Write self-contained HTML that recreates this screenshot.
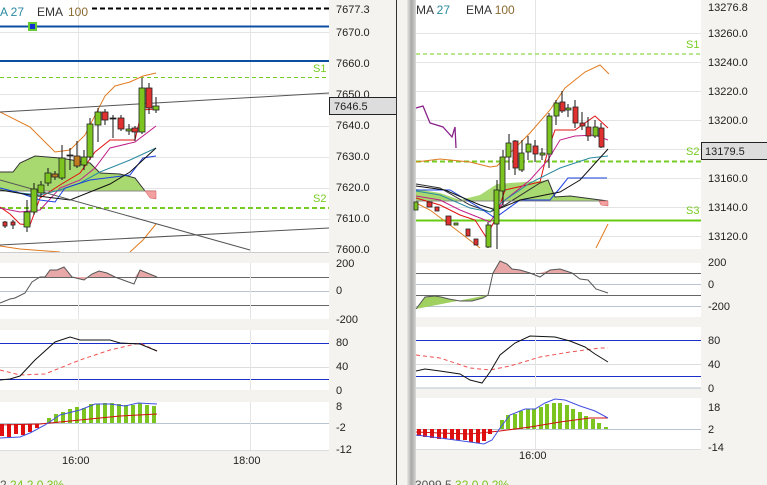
<!DOCTYPE html>
<html><head><meta charset="utf-8"><style>
html,body{margin:0;padding:0;background:#f4f3ef;}
svg{display:block;font-family:"Liberation Sans",Arial,sans-serif;}
</style></head><body>
<svg width="767" height="485" viewBox="0 0 767 485" xmlns="http://www.w3.org/2000/svg">
<rect width="767" height="485" fill="#f4f3ef"/>
<!-- LEFT PANEL -->
<rect x="0" y="0" width="329" height="252" fill="#fff"/>
<g stroke="#e4e4e4" stroke-width="1">
<line x1="0" y1="32.5" x2="329" y2="32.5"/><line x1="0" y1="94.5" x2="329" y2="94.5"/><line x1="0" y1="126.5" x2="329" y2="126.5"/><line x1="0" y1="157.5" x2="329" y2="157.5"/><line x1="0" y1="188.5" x2="329" y2="188.5"/><line x1="0" y1="219.5" x2="329" y2="219.5"/>
<line x1="78.5" y1="0" x2="78.5" y2="252"/><line x1="250.5" y1="0" x2="250.5" y2="252"/>
</g>
<line x1="92" y1="8.5" x2="329" y2="8.5" stroke="#000" stroke-width="2" stroke-dasharray="5,3"/>
<line x1="0" y1="26.5" x2="329" y2="26.5" stroke="#0b4fa0" stroke-width="2"/>
<rect x="28" y="22" width="9" height="9" fill="#6c3" /><rect x="30" y="24" width="5" height="5" fill="#1530d0"/>
<line x1="0" y1="61" x2="329" y2="61" stroke="#0b4fa0" stroke-width="2"/>
<line x1="0" y1="77.5" x2="329" y2="77.5" stroke="#7c2" stroke-dasharray="4,3"/>
<line x1="0" y1="208" x2="329" y2="208" stroke="#7c2" stroke-width="2" stroke-dasharray="5,3"/>
<text x="313" y="72" font-size="11" fill="#7c2">S1</text>
<text x="313" y="202" font-size="11" fill="#7c2">S2</text>
<text x="0" y="16" font-size="12" fill="#2a8aa0">A 27</text>
<text x="37" y="16" font-size="12" fill="#333">EMA</text><text x="68" y="16" font-size="12" fill="#8a6a30">100</text>
<polygon points="0,172 13,172 20,163 35,156 60,158 90,163 100,173 120,174 135,178 145,191 0,191" fill="#a8d870" stroke="none"/>
<polyline points="0,172 13,172 20,163 35,156 60,158 90,163 100,173 120,174 135,178 145,191" fill="none" stroke="#333" stroke-width="1"/>
<line x1="0" y1="191" x2="156" y2="191" stroke="#888"/>
<polygon points="145,191 156,191 156,199 150,198" fill="#f4a0a0" stroke="#c55" stroke-width=".5"/>
<g fill="none" stroke-width="1">
<polyline points="0,112 30,127 55,152 70,150 85,135 105,96 115,86 130,82 143,76 156,73" stroke="#e07b20"/>
<polyline points="0,246 20,249 60,252" stroke="#e07b20"/>
<polyline points="130,252 143,240 156,224" stroke="#e07b20"/>
<polyline points="0,207 10,214 20,224 30,225 40,198 60,185 80,173 95,152 110,140 135,140 142,110 156,109" stroke="#e01010"/>
<polyline points="0,208 20,212 40,210 60,188 80,180 95,168 110,148 135,142 156,126" stroke="#c0208a"/>
<polyline points="0,188 20,193 40,195 60,190 80,183 100,172 130,160 156,148" stroke="#2a8aa0"/>
<polyline points="0,188 20,193 40,200 55,202 65,188 90,180 130,175 143,158 156,156" stroke="#1a40e0"/>
<polyline points="0,190 30,195 70,200 110,184 130,172 156,148" stroke="#111"/>
<polyline points="0,112 329,93" stroke="#555"/>
<polyline points="0,245 329,228" stroke="#555"/>
<polyline points="0,180 250,250" stroke="#555"/>
</g>
<g stroke="#111" stroke-width="1">
<line x1="5" y1="221" x2="5" y2="228"/><line x1="13" y1="220" x2="13" y2="229"/><line x1="27" y1="200" x2="27" y2="232"/><line x1="34" y1="183" x2="34" y2="215"/><line x1="41" y1="181" x2="41" y2="196"/><line x1="48" y1="168" x2="48" y2="186"/><line x1="55" y1="171" x2="55" y2="180"/><line x1="62" y1="145" x2="62" y2="180"/><line x1="70" y1="148" x2="70" y2="170"/><line x1="77" y1="141" x2="77" y2="168"/><line x1="84" y1="150" x2="84" y2="170"/><line x1="90" y1="118" x2="90" y2="160"/><line x1="98" y1="108" x2="98" y2="142"/><line x1="105" y1="109" x2="105" y2="125"/><line x1="113" y1="115" x2="113" y2="138"/><line x1="121" y1="115" x2="121" y2="131"/><line x1="129" y1="124" x2="129" y2="135"/><line x1="135" y1="126" x2="135" y2="141"/><line x1="142" y1="78" x2="142" y2="134"/><line x1="149" y1="83" x2="149" y2="114"/><line x1="156" y1="97" x2="156" y2="113"/>
</g>
<g stroke="#222" stroke-width=".8">
<rect x="3" y="222" width="4" height="4" fill="#e03030"/><rect x="11" y="222" width="4" height="3" fill="#e03030"/>
<rect x="24" y="212" width="6" height="15" fill="#7cc520"/><rect x="31" y="189" width="6" height="23" fill="#7cc520"/><rect x="38" y="185" width="6" height="8" fill="#7cc520"/><rect x="45" y="173" width="6" height="10" fill="#7cc520"/><rect x="52" y="174" width="6" height="3" fill="#c07a20"/><rect x="59" y="158" width="6" height="20" fill="#7cc520"/><rect x="67" y="155" width="6" height="1" fill="#111"/><rect x="74" y="156" width="6" height="10" fill="#c07a20"/><rect x="81" y="157" width="6" height="8" fill="#7cc520"/><rect x="87" y="124" width="6" height="33" fill="#7cc520"/><rect x="95" y="112" width="6" height="13" fill="#7cc520"/><rect x="102" y="112" width="6" height="8" fill="#e03030"/><rect x="110" y="118" width="6" height="1" fill="#111"/><rect x="118" y="118" width="6" height="11" fill="#e03030"/><rect x="126" y="129" width="6" height="2" fill="#7cc520"/><rect x="132" y="128" width="6" height="4" fill="#e03030"/><rect x="139" y="88" width="6" height="44" fill="#7cc520"/><rect x="146" y="88" width="6" height="20" fill="#e03030"/><rect x="153" y="106" width="6" height="4" fill="#7cc520"/>
</g>
<g font-size="11" fill="#222">
<text x="336" y="13">7677.3</text><text x="336" y="36">7670.0</text><text x="336" y="67">7660.0</text><text x="336" y="98">7650.0</text><text x="336" y="129">7640.0</text><text x="336" y="160">7630.0</text><text x="336" y="191">7620.0</text><text x="336" y="222">7610.0</text><text x="336" y="253">7600.0</text>
</g>
<rect x="329.5" y="97.5" width="67" height="17" fill="#ddd" stroke="#222"/>
<text x="334" y="110" font-size="11" fill="#222">7646.5</text>
<line x1="0" y1="252.5" x2="329" y2="252.5" stroke="#ccc"/>
<!-- left osc1 -->
<rect x="0" y="263" width="329" height="56" fill="#fff"/>
<line x1="0" y1="277.5" x2="329" y2="277.5" stroke="#666"/><line x1="0" y1="291.5" x2="329" y2="291.5" stroke="#b8c4d0"/><line x1="0" y1="305.5" x2="329" y2="305.5" stroke="#666"/>
<line x1="78.5" y1="263" x2="78.5" y2="319" stroke="#e4e4e4"/><line x1="250.5" y1="263" x2="250.5" y2="319" stroke="#e4e4e4"/>
<polygon points="45,277 50,270 57,270 64,267 72,277 84,280 92,274 99,271 107,273 115,277 135,277 140,270 157,277" fill="#e8a8a8"/>
<polyline points="0,303 10,299 15,298 25,293 32,282 40,277 45,277 50,270 57,270 64,267 72,277 84,280 92,274 99,271 107,273 115,277 134,284 140,270 157,277" fill="none" stroke="#555"/>
<g font-size="11" fill="#222"><text x="336" y="267">200</text><text x="336" y="294">0</text><text x="336" y="323">-200</text></g>
<!-- left osc2 -->
<rect x="0" y="330" width="329" height="60" fill="#fff"/>
<line x1="0" y1="343.5" x2="329" y2="343.5" stroke="#1a30c8"/><line x1="0" y1="367.5" x2="329" y2="367.5" stroke="#ddd"/><line x1="0" y1="379.5" x2="329" y2="379.5" stroke="#1a30c8"/>
<line x1="78.5" y1="330" x2="78.5" y2="390" stroke="#e4e4e4"/><line x1="250.5" y1="330" x2="250.5" y2="390" stroke="#e4e4e4"/>
<polyline points="0,370 20,375 45,374 60,368 80,360 110,350 140,343 157,351" fill="none" stroke="#f05050" stroke-dasharray="4,3"/>
<polyline points="0,380 10,379 20,376 35,360 55,342 70,337 80,340 110,340 120,343 140,344 157,351" fill="none" stroke="#111"/>
<g font-size="11" fill="#222"><text x="336" y="346">80</text><text x="336" y="370">40</text><text x="336" y="394">0</text></g>
<!-- left osc3 -->
<rect x="0" y="402" width="329" height="48" fill="#fff"/>
<line x1="0" y1="423.5" x2="329" y2="423.5" stroke="#b8c4d0"/>
<line x1="78.5" y1="402" x2="78.5" y2="450" stroke="#e4e4e4"/><line x1="250.5" y1="402" x2="250.5" y2="450" stroke="#e4e4e4"/>
<g fill="#e01010"><rect x="0" y="424" width="4" height="12"/><rect x="7" y="424" width="4" height="13"/><rect x="14" y="424" width="4" height="10"/><rect x="21" y="424" width="4" height="11"/><rect x="28" y="424" width="4" height="8"/><rect x="35" y="424" width="4" height="4"/></g>
<g fill="#7cc520"><rect x="47" y="418" width="4" height="5"/><rect x="54" y="414" width="4" height="9"/><rect x="61" y="412" width="4" height="11"/><rect x="68" y="409" width="4" height="14"/><rect x="75" y="407" width="4" height="16"/><rect x="82" y="408" width="4" height="15"/><rect x="89" y="404" width="4" height="19"/><rect x="96" y="404" width="4" height="19"/><rect x="103" y="403" width="4" height="20"/><rect x="110" y="403" width="4" height="20"/><rect x="117" y="404" width="4" height="19"/><rect x="124" y="405" width="4" height="18"/><rect x="131" y="405" width="4" height="18"/><rect x="138" y="403" width="4" height="20"/><rect x="145" y="405" width="4" height="18"/><rect x="152" y="406" width="4" height="17"/></g>
<polyline points="0,425 40,424 80,420 120,416 157,414" fill="none" stroke="#d01010"/>
<polyline points="0,438 20,437 30,433 45,425 60,415 80,410 95,404 110,404 125,406 138,403 157,404" fill="none" stroke="#4050e0"/>
<g font-size="11" fill="#222"><text x="336" y="410">8</text><text x="336" y="431">-2</text><text x="336" y="453">-12</text></g>
<line x1="0" y1="450.5" x2="329" y2="450.5" stroke="#ddd"/>
<g font-size="11" fill="#222"><text x="62" y="464">16:00</text><text x="233" y="464">18:00</text></g>
<text x="0" y="489" font-size="12" fill="#555">2 <tspan fill="#7cc520">24.2 0.3%</tspan></text>
<line x1="396.5" y1="0" x2="396.5" y2="485" stroke="#333"/>
<!-- shadow -->
<defs><linearGradient id="sh" x1="0" x2="1"><stop offset="0" stop-color="#e8e8e6"/><stop offset=".5" stop-color="#a8a8a6"/><stop offset="1" stop-color="#d8d8d6"/></linearGradient></defs>
<rect x="407" y="0" width="9" height="485" fill="url(#sh)"/>
<!-- RIGHT PANEL -->
<rect x="416" y="0" width="285" height="249" fill="#fff"/>
<g stroke="#e4e4e4">
<line x1="416" y1="33.5" x2="701" y2="33.5"/><line x1="416" y1="62.5" x2="701" y2="62.5"/><line x1="416" y1="91.5" x2="701" y2="91.5"/><line x1="416" y1="120.5" x2="701" y2="120.5"/><line x1="416" y1="149.5" x2="701" y2="149.5"/><line x1="416" y1="178.5" x2="701" y2="178.5"/><line x1="416" y1="207.5" x2="701" y2="207.5"/><line x1="416" y1="236.5" x2="701" y2="236.5"/>
<line x1="535.5" y1="0" x2="535.5" y2="249"/>
</g>
<text x="416" y="14" font-size="12" fill="#333">MA <tspan fill="#2a8aa0">27</tspan></text>
<text x="466" y="14" font-size="12" fill="#333">EMA <tspan fill="#8a6a30">100</tspan></text>
<line x1="416" y1="54" x2="701" y2="54" stroke="#7c2" stroke-dasharray="4,3"/>
<line x1="416" y1="161.5" x2="701" y2="161.5" stroke="#7c2" stroke-width="2" stroke-dasharray="5,3"/>
<line x1="416" y1="220.5" x2="701" y2="220.5" stroke="#6c1" stroke-width="2"/>
<text x="686" y="48" font-size="11" fill="#7c2">S1</text><text x="686" y="155" font-size="11" fill="#7c2">S2</text><text x="686" y="214" font-size="11" fill="#7c2">S3</text>
<polygon points="416,189 440,193 460,200 480,195 497,184 510,183 540,181 548,180 555,197 570,196 600,200 608,201 416,201" fill="#a8d870"/>
<polyline points="416,184 440,188 470,205 490,212 505,205 540,183 548,180 555,197 570,196 608,201" fill="none" stroke="#333"/>
<line x1="416" y1="201" x2="608" y2="201" stroke="#888"/>
<polygon points="599,201 608,201 608,206 601,205" fill="#f4a0a0" stroke="#c55" stroke-width=".5"/>
<g fill="none">
<polyline points="416,108 423,106 430,123 443,127 452,137 455,127 456,148" stroke="#8a208a" stroke-width="1.3"/>
<polyline points="416,162 440,159 470,162 490,167 497,166 510,153 530,133 550,110 565,88 585,72 600,65 609,74" stroke="#e07b20"/>
<polyline points="416,203 430,210 450,225 480,248" stroke="#e07b20"/>
<polyline points="596,248 600,240 608,224" stroke="#e07b20"/>
<polyline points="416,198 440,205 460,215 475,220 486,237 495,220 505,190 540,182 548,150 555,130 575,130 595,116 608,128" stroke="#e01010"/>
<polyline points="416,196 440,200 460,210 490,222 505,200 530,180 548,160 560,140 575,136 595,135 608,140" stroke="#c0208a"/>
<polyline points="416,191 440,195 470,208 490,212 505,200 530,183 560,168 590,158 608,156" stroke="#2a8aa0"/>
<polyline points="416,190 450,190 480,208 495,218 520,200 550,200 560,188 568,178 607,178" stroke="#1a40e0"/>
<polyline points="416,186 445,190 480,205 496,210 520,200 560,192 580,180 608,149" stroke="#111"/>
</g>
<g stroke="#111">
<line x1="497" y1="180" x2="497" y2="249"/><line x1="503" y1="150" x2="503" y2="205"/><line x1="509" y1="134" x2="509" y2="170"/><line x1="515" y1="140" x2="515" y2="175"/><line x1="522" y1="140" x2="522" y2="172"/><line x1="528" y1="136" x2="528" y2="160"/><line x1="535" y1="140" x2="535" y2="162"/><line x1="542" y1="148" x2="542" y2="160"/><line x1="549" y1="113" x2="549" y2="168"/><line x1="556" y1="100" x2="556" y2="125"/><line x1="562" y1="91" x2="562" y2="113"/><line x1="568" y1="104" x2="568" y2="117"/><line x1="575" y1="100" x2="575" y2="128"/><line x1="582" y1="112" x2="582" y2="130"/><line x1="588" y1="117" x2="588" y2="141"/><line x1="595" y1="120" x2="595" y2="138"/><line x1="601" y1="123" x2="601" y2="148"/><line x1="488" y1="222" x2="488" y2="248"/>
</g>
<g stroke="#222" stroke-width=".8">
<rect x="414" y="202" width="4" height="8" fill="#7cc520"/><rect x="427" y="202" width="5" height="5" fill="#e03030"/><rect x="435" y="207" width="4" height="4" fill="#e03030"/><rect x="446" y="216" width="5" height="9" fill="#e03030"/><rect x="454" y="223" width="4" height="2" fill="#7cc520"/><rect x="466" y="229" width="4" height="7" fill="#e03030"/><rect x="474" y="239" width="4" height="6" fill="#e03030"/><rect x="486" y="225" width="5" height="22" fill="#7cc520"/><rect x="494" y="190" width="5" height="34" fill="#7cc520"/><rect x="500" y="157" width="5" height="34" fill="#7cc520"/><rect x="506" y="143" width="5" height="14" fill="#7cc520"/><rect x="513" y="141" width="5" height="27" fill="#e03030"/><rect x="519" y="153" width="5" height="17" fill="#7cc520"/><rect x="526" y="144" width="5" height="8" fill="#7cc520"/><rect x="533" y="146" width="5" height="8" fill="#e03030"/><rect x="540" y="153" width="5" height="2" fill="#7cc520"/><rect x="547" y="116" width="5" height="38" fill="#7cc520"/><rect x="554" y="103" width="5" height="13" fill="#7cc520"/><rect x="560" y="102" width="5" height="9" fill="#e03030"/><rect x="566" y="108" width="5" height="2" fill="#7cc520"/><rect x="573" y="107" width="5" height="16" fill="#e03030"/><rect x="580" y="123" width="5" height="3" fill="#e03030"/><rect x="586" y="127" width="5" height="9" fill="#e03030"/><rect x="593" y="127" width="5" height="9" fill="#7cc520"/><rect x="599" y="128" width="5" height="19" fill="#e03030"/>
</g>
<g font-size="11" fill="#222">
<text x="708" y="11">13276.8</text><text x="708" y="37">13260.0</text><text x="708" y="66">13240.0</text><text x="708" y="95">13220.0</text><text x="708" y="124">13200.0</text><text x="708" y="182">13160.0</text><text x="708" y="211">13140.0</text><text x="708" y="240">13120.0</text>
</g>
<rect x="701.5" y="142.5" width="66" height="17" fill="#ddd" stroke="#222"/>
<text x="705" y="155" font-size="11" fill="#222">13179.5</text>
<!-- right osc1 -->
<rect x="416" y="263" width="285" height="54" fill="#fff"/>
<line x1="416" y1="273.5" x2="701" y2="273.5" stroke="#666"/><line x1="416" y1="284.5" x2="701" y2="284.5" stroke="#b8c4d0"/><line x1="416" y1="295.5" x2="701" y2="295.5" stroke="#666"/><line x1="416" y1="306.5" x2="701" y2="306.5" stroke="#b8c4d0"/>
<line x1="535.5" y1="263" x2="535.5" y2="317" stroke="#e4e4e4"/>
<polygon points="416,309 425,297 435,296 441,297 449,299 460,301 472,301 483,298 488,295" fill="#9fd060"/>
<polygon points="493,273 500,261 507,264 512,269 520,270 530,273 540,273 550,270 560,269 572,273" fill="#e8a8a8"/>
<polyline points="416,309 425,297 435,296 441,297 449,299 460,301 472,301 483,298 488,295 493,273 500,261 507,264 512,269 520,270 530,273 540,277 550,270 560,269 572,273 580,279 588,280 596,289 608,293" fill="none" stroke="#555"/>
<g font-size="11" fill="#222"><text x="708" y="266">200</text><text x="708" y="288">0</text><text x="708" y="310">-200</text></g>
<!-- right osc2 -->
<rect x="416" y="327" width="285" height="61" fill="#fff"/>
<line x1="416" y1="340.5" x2="701" y2="340.5" stroke="#1a30c8"/><line x1="416" y1="364.5" x2="701" y2="364.5" stroke="#ddd"/><line x1="416" y1="376.5" x2="701" y2="376.5" stroke="#1a30c8"/><line x1="416" y1="388" x2="701" y2="388" stroke="#b8c4d0"/>
<line x1="535.5" y1="327" x2="535.5" y2="388" stroke="#e4e4e4"/>
<polyline points="416,355 440,358 470,368 490,370 510,366 540,357 570,352 600,348 608,348" fill="none" stroke="#f05050" stroke-dasharray="4,3"/>
<polyline points="416,371 425,369 440,371 460,374 470,380 482,383 490,372 500,355 515,343 530,336 555,337 570,341 585,347 595,354 608,362" fill="none" stroke="#111"/>
<g font-size="11" fill="#222"><text x="708" y="344">80</text><text x="708" y="368">40</text><text x="708" y="392">0</text></g>
<!-- right osc3 -->
<rect x="416" y="398" width="285" height="51" fill="#fff"/>
<line x1="416" y1="429.5" x2="701" y2="429.5" stroke="#b8c4d0"/>
<line x1="535.5" y1="398" x2="535.5" y2="449" stroke="#e4e4e4"/>
<g fill="#e01010"><rect x="417" y="429" width="4" height="7"/><rect x="423" y="429" width="4" height="8"/><rect x="430" y="429" width="4" height="9"/><rect x="437" y="429" width="4" height="10"/><rect x="443" y="429" width="4" height="10"/><rect x="450" y="429" width="4" height="11"/><rect x="456" y="429" width="4" height="11"/><rect x="463" y="429" width="4" height="11"/><rect x="469" y="429" width="4" height="13"/><rect x="476" y="429" width="4" height="14"/><rect x="482" y="429" width="4" height="12"/><rect x="488" y="429" width="4" height="5"/></g>
<g fill="#7cc520"><rect x="500" y="420" width="4" height="9"/><rect x="506" y="415" width="4" height="14"/><rect x="513" y="414" width="4" height="15"/><rect x="519" y="411" width="4" height="18"/><rect x="526" y="409" width="4" height="20"/><rect x="532" y="409" width="4" height="20"/><rect x="539" y="407" width="4" height="22"/><rect x="545" y="404" width="4" height="25"/><rect x="552" y="403" width="4" height="26"/><rect x="558" y="403" width="4" height="26"/><rect x="565" y="405" width="4" height="24"/><rect x="571" y="409" width="4" height="20"/><rect x="578" y="412" width="4" height="17"/><rect x="584" y="416" width="4" height="13"/><rect x="591" y="419" width="4" height="10"/><rect x="597" y="423" width="4" height="6"/><rect x="604" y="427" width="4" height="2"/></g>
<polyline points="416,432 440,433 470,434 500,431 530,427 560,422 590,418 608,418" fill="none" stroke="#d01010"/>
<polyline points="416,435 440,438 470,442 484,444 492,440 500,428 510,415 525,409 535,409 545,403 555,399 565,400 580,406 595,411 608,418" fill="none" stroke="#4050e0"/>
<g font-size="11" fill="#222"><text x="708" y="411">18</text><text x="708" y="433">2</text><text x="708" y="451">-14</text></g>
<line x1="416" y1="449.5" x2="701" y2="449.5" stroke="#ddd"/>
<text x="519" y="459" font-size="11" fill="#222">16:00</text>
<text x="415" y="489" font-size="12" fill="#555">3099.5 <tspan fill="#7cc520">32.0 0.2%</tspan></text>
</svg>
</body></html>
